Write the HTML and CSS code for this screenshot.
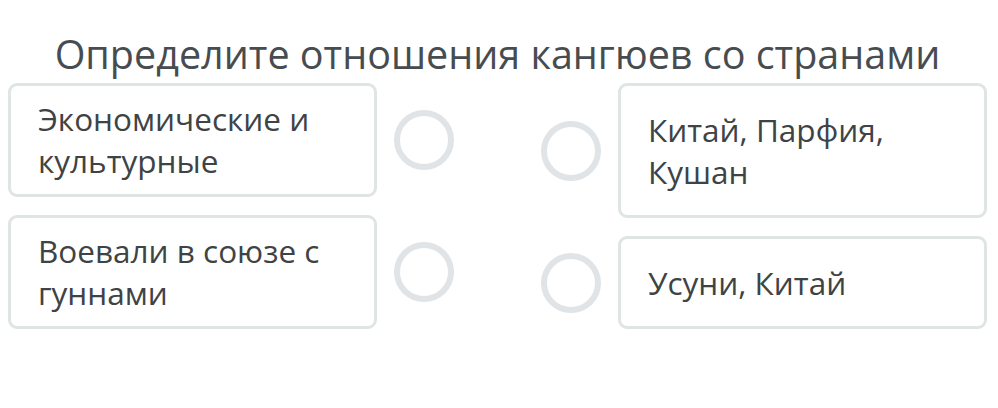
FILE: index.html
```html
<!DOCTYPE html>
<html lang="ru">
<head>
    <meta charset="UTF-8">
    <meta name="viewport" content="width=device-width, initial-scale=1.0">
    <title>Сопоставление</title>
    <link rel="stylesheet" href="styles.css">
</head>
<body>
    <div class="task">
        <h2 class="task-title">Определите отношения кангюев со странами</h2>
        <div class="match">
            <div class="column column-left">
                <div class="row">
                    <div class="card">Экономические и культурные</div>
                    <span class="dot"></span>
                </div>
                <div class="row">
                    <div class="card">Воевали в союзе с гуннами</div>
                    <span class="dot"></span>
                </div>
            </div>
            <div class="column column-right">
                <div class="row">
                    <span class="dot"></span>
                    <div class="card">Китай, Парфия, Кушан</div>
                </div>
                <div class="row">
                    <span class="dot"></span>
                    <div class="card">Усуни, Китай</div>
                </div>
            </div>
        </div>
    </div>
</body>
</html>
```

FILE: styles.css
```css
body {
    margin: 0;
    padding: 0 11px 0 8px;
    font-family: "Open Sans", Arial, sans-serif;
    background-color: #ffffff;
    color: #3e4346;
}

.task-title {
    margin: 28px 0 2px;
    font-size: 39.5px;
    font-weight: 400;
    line-height: 53px;
    text-align: center;
    color: #474c50;
}

.match {
    display: flex;
    justify-content: space-between;
}

.column {
    width: 446px;
    display: flex;
    flex-direction: column;
    gap: 18px;
}

.row {
    flex: 1 1 auto;
    display: flex;
    align-items: center;
    gap: 17px;
}

.card {
    flex: 1;
    align-self: stretch;
    display: flex;
    align-items: center;
    padding: 12px 18px 12px 27px;
    border: 3px solid #dfe4e4;
    border-radius: 9px;
    font-size: 31.5px;
    line-height: 42px;
}

.dot {
    width: 48px;
    height: 48px;
    border: 6px solid #e0e4e7;
    border-radius: 50%;
    flex-shrink: 0;
}
```
